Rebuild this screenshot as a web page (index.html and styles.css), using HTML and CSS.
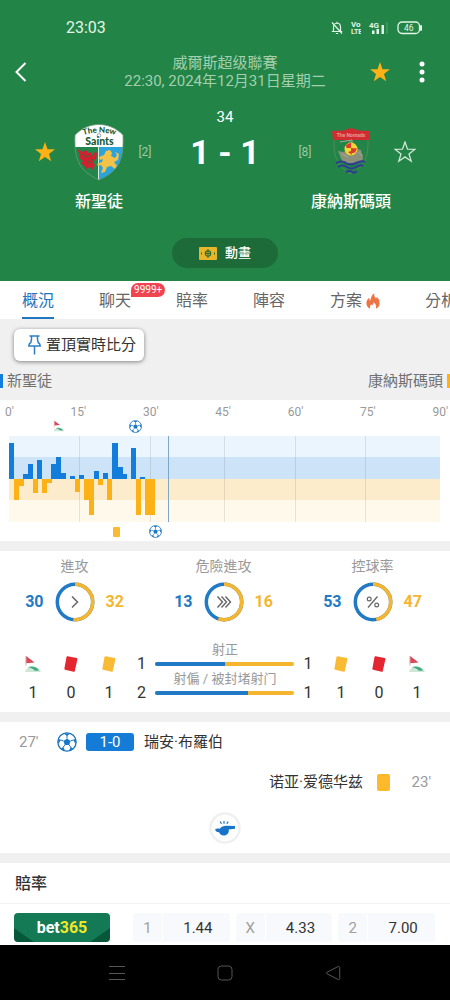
FILE: index.html
```
<!DOCTYPE html>
<html lang="zh-Hant">
<head>
<meta charset="utf-8">
<meta name="viewport" content="width=device-width, initial-scale=1">
<title>新聖徒 1 - 1 康納斯碼頭</title>
<link rel="stylesheet" href="styles.css">
</head>
<body>
<svg class="defs" aria-hidden="true">
  <symbol id="ball" viewBox="0 0 20 20">
    <circle cx="10" cy="10" r="9.2" fill="#fff" stroke="#1a6fb8" stroke-width="1.2"/>
    <path d="M10 6.4l3.5 2.5-1.3 4.1H7.8L6.5 8.9z" fill="#1678c8"/>
    <path d="M10 6.4V3.2M13.500 8.900l3.200-1M12.200 13l2 2.700M7.800 13l-2 2.700M6.500 8.900l-3.200-1" stroke="#1678c8" stroke-width="1"/>
    <path d="M6.800 1.500h6.400L10 4zM18.900 6.400l-.1 6.100-2.600-4.600zM16.400 16.600l-4.500 2.500 1.600-3.800zM8.100 19.100l-4.500-2.500 2.900-1.300zM1.100 6.400l.1 6.100 2.600-4.600z" fill="#1678c8"/>
  </symbol>
  <symbol id="corner" viewBox="0 0 18 18">
    <path d="M2.200 1l8.300 6.500-8.300.8z" fill="#dc4655"/>
    <path d="M1.800 1v10" stroke="#d9a3a6" stroke-width=".8"/>
    <path d="M1 17c.5-3.500 4-5.500 7.500-5.500S15.500 13.500 17 17z" fill="#cfe6da"/>
    <path d="M4 12.300c4-1.800 9-.3 11.200 3.200l-4.500.2c-1.500-1.900-3.700-3-6.700-3.400z" fill="#3fae7c"/>
  </symbol>
  <symbol id="card" viewBox="0 0 18 18">
    <path d="M5.700 1.200l9 1.800a1 1 0 01.7 1.200l-2.600 11.700a1 1 0 01-1.200.8l-8.500-2a1 1 0 01-.7-1.200L4.500 2a1 1 0 011.200-.8z" fill="currentColor"/>
  </symbol>
  <symbol id="star" viewBox="0 0 22 22">
    <path d="M11 1l2.500 7.200 7.500.1-6 4.600 2.200 7.300L11 15.900l-6.200 4.300L7 12.900 1 8.300l7.500-.1z"/>
  </symbol>
</svg>

<header class="hero">
  <div class="status">
    <span class="clock">23:03</span>
    <div class="status-icons">
      <svg width="12" height="14" viewBox="0 0 12 14" fill="none" stroke="#e3f5e8" stroke-width="1.200"><path d="M2.500 10.500V6c0-5 7-5 7 0v4.500M.8 10.500h10.400M4.800 12.500h2.400M6 2V.8M1 1.500l10 11"/></svg>
      <svg width="10" height="14" viewBox="0 0 10 14" font-family="Roboto" font-size="8" font-weight="700" fill="#e3f5e8"><text x="0" y="6">Vo</text><text x="0" y="13" font-size="7">LTE</text></svg>
      <svg width="20" height="14" viewBox="0 0 20 14"><text x="0" y="6.500" font-family="Roboto" font-size="8" font-weight="700" fill="#e3f5e8">4G</text><path d="M3 9.500h2.500V13H3zM7.500 8H10v5H7.500zM12.500 4H15v9h-2.500z" fill="#e3f5e8"/><path d="M18 1v12" stroke="#55a572"/></svg>
      <svg width="26" height="14" viewBox="0 0 26 14"><rect x="1" y="1" width="21.500" height="11.500" rx="4" fill="none" stroke="#e3f5e8" stroke-width="1.300"/><path d="M24 5v4" stroke="#e3f5e8" stroke-width="2" stroke-linecap="round"/><text x="11.800" y="10" text-anchor="middle" font-family="Roboto" font-size="8.500" fill="#e3f5e8">46</text></svg>
    </div>
  </div>
  <div class="topbar">
    <button class="icon-btn back" aria-label="返回"><svg width="12" height="20" viewBox="0 0 12 20" fill="none" stroke="#fff" stroke-width="2"><path d="M10.500 1L1.500 10l9 9"/></svg></button>
    <div class="league"><div>威爾斯超级聯賽</div><div>22:30, 2024年12月31日星期二</div></div>
    <div class="actions">
      <button class="icon-btn" aria-label="收藏"><svg class="star-on" width="22" height="22"><use href="#star"/></svg></button>
      <button class="icon-btn more" aria-label="更多"><svg width="6" height="22" viewBox="0 0 6 22" fill="#fff"><circle cx="3" cy="3" r="2.500"/><circle cx="3" cy="11" r="2.500"/><circle cx="3" cy="19" r="2.500"/></svg></button>
    </div>
  </div>
  <div class="minute">34</div>
  <div class="match">
    <button class="icon-btn" aria-label="收藏新聖徒"><svg class="star-on" width="22" height="22"><use href="#star"/></svg></button>
    <svg class="crest" width="50" height="58" viewBox="0 0 50 58">
      <defs><clipPath id="shield"><path d="M1 12C8 5 16 1.500 25 1.500S42 5 49 12c.5 13-.500 22-5 30C39 50 31 54 25 57 19 54 11 50 6 42 1.500 34 .500 25 1 12z"/></clipPath></defs>
      <g clip-path="url(#shield)">
        <rect width="50" height="24" fill="#fff"/>
        <rect y="24" width="24.500" height="34" fill="#22854c"/>
        <rect x="24.500" y="24" width="26" height="34" fill="#2ba3dc"/>
        <path d="M24.500 24v34" stroke="#d8ecd9"/>
        <path d="M3 26l6 3 3-2 2 3 3-1 1 4 3-4 2 1-1 6-3 3 2 3-2 5-3-3-4 2-2-4-3-1 2-3-4-3 1-3z" fill="#d3202f"/>
        <path d="M8 31l4 3 3-1M13 38l4 2 2-4" stroke="#3a6a3c" stroke-width="1" fill="none"/>
        <path d="M32 28l4-1 2 3-1 3 4 2 2-3-2-3 4 2-1 6-4 2 3 4-2 3-4-3-4 1-2 5-4 1 2-5-2-3-3 1-1-2 5-2 1-3-3 1-1-3 5-2z" fill="#f4c246"/>
      </g>
      <path d="M1 12C8 5 16 1.500 25 1.500S42 5 49 12c.5 13-.500 22-5 30C39 50 31 54 25 57 19 54 11 50 6 42 1.500 34 .500 25 1 12z" fill="none" stroke="#6f9a76" stroke-width=".8"/>
      <path id="arc" d="M7 13Q25 6 44 13" fill="none"/>
      <text font-family="Lato, sans-serif" font-size="8" font-weight="900" fill="#175a34"><textPath href="#arc" startOffset="50%" text-anchor="middle">The New</textPath></text>
      <circle cx="25" cy="12.500" r="1.800" fill="#fff" stroke="#777" stroke-width=".7"/>
      <text x="25.500" y="22" text-anchor="middle" font-family="Lato, sans-serif" font-size="10.500" font-weight="900" fill="#175a34">Saints</text>
    </svg>
    <span class="rank">[2]</span>
    <span class="score">1 - 1</span>
    <span class="rank">[8]</span>
    <svg class="crest" width="42" height="50" viewBox="0 0 42 50">
      <path d="M4 12c-1 18 4 28 17 35 13-7 18-17 17-35" fill="none" stroke="#4e8d59" stroke-width="1"/>
      <path d="M2 4l11-.5L21 1l8 2.500L40 4l-1 9H3z" fill="#d02c31"/>
      <text x="21" y="10" text-anchor="middle" font-family="Roboto" font-size="5" font-weight="700" fill="#eb9a90">The Nomads</text>
      <path d="M8 24c4 1 7 2 9-2l3-9 3 8 8 2 2 9-4 4H13z" fill="#8b917a"/>
      <path d="M10 15l12-2v5M12 27l6 3M28 25l5 4" stroke="#a5a992" fill="none"/>
      <circle cx="21" cy="22" r="6.500" fill="#f1d735"/>
      <path d="M16 18l5-2.500V21h-4.500zM21 21l6 .5-2 4-4 1zM18 25l3-1 1 4z" fill="#da3a32"/>
      <path d="M6 36q6-3 10 0t10 0 9-1M8 40q5-3 9 0t9 0 7-1M16 45q4-2 6 0t5-1" fill="none" stroke="#303b91" stroke-width="2"/>
    </svg>
    <button class="icon-btn" aria-label="收藏康納斯碼頭"><svg class="star-off" width="24" height="24" viewBox="-1 -1 24 24"><use href="#star" width="22" height="22"/></svg></button>
    <span class="team home">新聖徒</span>
    <span class="team away">康納斯碼頭</span>
  </div>
  <button class="animate">
    <svg width="18" height="13" viewBox="0 0 18 13"><rect width="18" height="13" rx="1" fill="#e9b52b"/><circle cx="9" cy="6.500" r="2.700" fill="none" stroke="#2d6c30" stroke-width="1.200"/><path d="M9 2v9M6.500 6.500h5M2.500 5.500v2M15.500 5.500v2" stroke="#2d6c30" stroke-width="1"/></svg>
    動畫
  </button>
</header>

<nav class="tabs">
  <a class="active" href="#overview">概況</a>
  <a href="#chat">聊天<span class="badge">9999+</span></a>
  <a href="#odds">賠率</a>
  <a href="#lineup">陣容</a>
  <a href="#tips">方案<svg width="14" height="16" viewBox="0 0 14 16"><path d="M4 15.700C1.500 14.500.300 12.500.400 10 .500 7.800 1.500 6 3.300 4.700c0 1.500.2 2.300.9 3C5 5 5.300 2.300 8.300.300 8 3 8.700 4.300 10.200 5.700l.5-1.900C12.800 5.600 13.800 8 13.600 10.400c-.2 2.400-1.500 4.300-3.800 5.300.9-2.400.3-4.300-2.200-6.400 0 1.500-.6 2.500-1.600 3.100-.3-.5-.5-.9-.5-1.400C4.200 12.400 3.700 13.900 4 15.700z" fill="#ee7345"/></svg></a>
  <a href="#analysis">分析</a>
</nav>

<main>
  <div class="pin-row">
    <button class="pin">
      <svg width="13" height="20" viewBox="0 0 13 20" fill="none" stroke="#2b80c5" stroke-width="1.500"><path d="M1.500 1h10M3.500 1v3.500L2.800 7.500C1.500 8.300.800 9.300.800 11h11.400c0-1.700-.7-2.700-2-3.500l-.7-3V1M6.500 11v8.500"/></svg>
      置頂實時比分
    </button>
  </div>
  <div class="legend"><span class="home-key">新聖徒</span><span class="away-key">康納斯碼頭</span></div>

  <section class="card chart" id="overview">
    <div class="ticks"><span>0'</span><span>15'</span><span>30'</span><span>45'</span><span>60'</span><span>75'</span><span>90'</span></div>
    <div class="lane top">
      <svg class="m11" width="12" height="12"><use href="#corner"/></svg>
      <svg class="m27" width="13" height="13"><use href="#ball"/></svg>
    </div>
    <svg class="plot" viewBox="0 0 431 86" preserveAspectRatio="none" shape-rendering="crispEdges">
      <path d="M0 0h431v21H0z" fill="#eaf5fd"/><path d="M0 21h431v22H0z" fill="#cde3f7"/>
      <path d="M0 43h431v21H0z" fill="#fdeccb"/><path d="M0 64h431v22H0z" fill="#fef9ea"/>
      <path d="M70.500 0v86M141.500 0v86M215.500 0v86M286.500 0v86M356.500 0v86" stroke="#000" stroke-opacity=".09"/>
      <path fill="#127ddb" d="M0 43V7h5v36zM14 43v-5h5v5zM19 43V28h5v15zM28 43V24h5v19zM42 43V28h5v15zM47 43V21h5v22zM52 43v-6h5v6zM61 43v-3h5v3zM70 43v-4h5v4zM85 43v-8h5v8zM94 43v-6h5v6zM103 43V7h6v36zM109 43V31h5v12zM114 43v-5h4v5zM122 43V12h5v31zM131 43v-2h5v2z"/>
      <path fill="#fcb116" d="M5 43v21h5V43zM10 43v7h5v-7zM24 43v14h5V43zM33 43v14h5V43zM38 43v4h5v-4zM66 43v13h5V43zM75 43v21h5V43zM80 43v36h5V43zM89 43v6h5v-6zM98 43v21h5V43zM127 43v36h5V43zM136 43v36h10V43z"/>
      <path d="M159.500 0v86" stroke="#7fa6c6"/>
    </svg>
    <div class="lane bottom">
      <span class="mini-card m23"></span>
      <svg class="m31" width="13" height="13"><use href="#ball"/></svg>
    </div>
  </section>

  <section class="card stats">
    <div class="rings">
      <div class="ring"><h3>進攻</h3><div><b class="h">30</b>
        <svg width="40" height="40" viewBox="0 0 40 40" fill="none"><g transform="rotate(-90 20 20)" stroke-width="3.500"><circle cx="20" cy="20" r="17.700" stroke="#207ac5"/><circle cx="20" cy="20" r="17.700" stroke="#f5b52e" pathLength="100" stroke-dasharray="51.600 48.400"/></g><path d="M17 14.500l5.500 5.500-5.500 5.500" stroke="#666" stroke-width="1.500"/></svg>
        <b class="a">32</b></div></div>
      <div class="ring"><h3>危險進攻</h3><div><b class="h">13</b>
        <svg width="40" height="40" viewBox="0 0 40 40" fill="none"><g transform="rotate(-90 20 20)" stroke-width="3.500"><circle cx="20" cy="20" r="17.700" stroke="#207ac5"/><circle cx="20" cy="20" r="17.700" stroke="#f5b52e" pathLength="100" stroke-dasharray="55.200 44.800"/></g><path d="M13.500 14.500l5 5.500-5 5.500M17.500 14.500l5 5.500-5 5.500M21.500 14.500l5 5.500-5 5.500" stroke="#666" stroke-width="1.400"/></svg>
        <b class="a">16</b></div></div>
      <div class="ring"><h3>控球率</h3><div><b class="h">53</b>
        <svg width="40" height="40" viewBox="0 0 40 40" fill="none"><g transform="rotate(-90 20 20)" stroke-width="3.500"><circle cx="20" cy="20" r="17.700" stroke="#207ac5"/><circle cx="20" cy="20" r="17.700" stroke="#f5b52e" pathLength="100" stroke-dasharray="47 53"/></g><path d="M24.500 14.500l-9.500 11" stroke="#666" stroke-width="1.300"/><circle cx="16.200" cy="17" r="1.900" stroke="#666" stroke-width="1.200"/><circle cx="23.700" cy="23" r="1.900" stroke="#666" stroke-width="1.200"/></svg>
        <b class="a">47</b></div></div>
    </div>
    <div class="details">
      <div class="counts">
        <div><svg width="18" height="18"><use href="#corner"/></svg><span>1</span></div>
        <div><svg class="red" width="18" height="18"><use href="#card"/></svg><span>0</span></div>
        <div><svg class="yellow" width="18" height="18"><use href="#card"/></svg><span>1</span></div>
      </div>
      <div class="shots">
        <div class="shot-label">射正</div>
        <div class="shot"><span>1</span><div class="bar"><i style="width:50%"></i></div><span>1</span></div>
        <div class="shot-label">射偏 / 被封堵射门</div>
        <div class="shot"><span>2</span><div class="bar"><i style="width:67%"></i></div><span>1</span></div>
      </div>
      <div class="counts">
        <div><svg class="yellow" width="18" height="18"><use href="#card"/></svg><span>1</span></div>
        <div><svg class="red" width="18" height="18"><use href="#card"/></svg><span>0</span></div>
        <div><svg width="18" height="18"><use href="#corner"/></svg><span>1</span></div>
      </div>
    </div>
  </section>

  <section class="card events">
    <div class="event"><time>27'</time><svg width="20" height="20"><use href="#ball"/></svg><span class="goal">1-0</span><span class="player">瑞安·布羅伯</span></div>
    <div class="event away"><span class="player" lang="zh-Hans">诺亚·爱德华兹</span><span class="booking"></span><time>23'</time></div>
    <div class="whistle"><svg width="32" height="32" viewBox="0 0 32 32"><circle cx="16" cy="16" r="14.500" fill="#fff" stroke="#f1f0f1" stroke-width="2.500"/><path d="M6 17.500c1.500-1.300 3.300-1.200 4.800-.7 1.700-2.300 4-3.100 6.600-3l8.600.2v2.700l-6.300.9c.7 3.500-1.700 6-4.900 6-2.400 0-4.200-1.300-4.800-3.500-1.700.3-3.400-.8-4-2.600z" fill="#1774c8"/><path d="M15 11.800V9M12.500 11.800l-1.300-2.200M17.800 11.800l1.300-2.200" stroke="#1774c8" stroke-width="1.200"/></svg></div>
  </section>

  <section class="card odds" id="odds">
    <h2>賠率</h2>
    <div class="odds-row">
      <a class="book" href="#bet365">bet<em>365</em></a>
      <div class="prices">
        <button class="price"><span>1</span><b>1.44</b></button>
        <button class="price"><span>X</span><b>4.33</b></button>
        <button class="price"><span>2</span><b>7.00</b></button>
      </div>
    </div>
  </section>
</main>

<footer class="sysnav">
  <button aria-label="最近"><svg width="16" height="16" viewBox="0 0 16 16"><path d="M0 1.500h16M0 8.500h16M0 14.500h16"/></svg></button>
  <button aria-label="主頁"><svg width="16" height="16" viewBox="0 0 16 16"><rect x="1" y="1" width="14" height="14" rx="3.500"/></svg></button>
  <button aria-label="返回"><svg width="16" height="16" viewBox="0 0 16 16"><path d="M13.200 1.500L1.800 7.300a.8.800 0 000 1.400l11.400 5.800a1 1 0 001.500-.9V2.400a1 1 0 00-1.500-.9z"/></svg></button>
</footer>
</body>
</html>
```
FILE: styles.css
```
* { box-sizing: border-box; }
body {
  margin: 0;
  min-height: 100vh;
  display: flex;
  flex-direction: column;
  background: #f0f0f0;
  color: #333;
  font-family: Roboto, "Noto Sans CJK TC", sans-serif;
  font-size: 15px;
  line-height: 20px;
  overflow-x: hidden;
}
button { border: 0; padding: 0; background: none; font: inherit; color: inherit; cursor: pointer; }
a { color: inherit; text-decoration: none; }
h2, h3 { margin: 0; font-weight: 400; }
svg { display: block; flex: none; }
.defs { position: absolute; width: 0; height: 0; }

/* header */
.hero { background: #228447; color: #fff; display: flex; flex-direction: column; padding-bottom: 13px; }
.status { display: flex; justify-content: space-between; align-items: center; padding: 18px 27px 0 66px; color: #e3f5e8; }
.clock { font-size: 16px; }
.status-icons { display: flex; align-items: center; gap: 8px; }
.topbar { display: grid; grid-template-columns: 72px 1fr 72px; align-items: center; padding: 16px 12px 0; }
.icon-btn { display: flex; justify-content: center; align-items: center; }
.back { justify-self: start; padding: 0 3px; }
.league { text-align: center; line-height: 18px; color: #a4cfae; white-space: nowrap; }
.actions { display: flex; justify-content: flex-end; gap: 28px; padding-right: 13px; }
.star-on { fill: #fcb116; }
.star-off { fill: none; stroke: #cfe6d4; stroke-width: 1.300px; }
.minute { text-align: center; padding-top: 17px; }
.match { display: grid; grid-template-columns: 50px 58px 34px 1fr 34px 58px 50px; grid-template-rows: 50px 24px; row-gap: 13px; align-items: center; justify-items: center; padding: 0 20px; }
.match > * { grid-row: 1; }
.rank { font-size: 12px; color: #9fcaa9; }
.score { font-size: 34px; line-height: 40px; font-weight: 700; white-space: nowrap; }
.team { font-size: 16px; line-height: 24px; font-weight: 500; white-space: nowrap; }
.match > .team { grid-row: 2; }
.home { grid-column: 2; }
.match .away { grid-column: 6; }
.animate { display: flex; align-items: center; justify-content: center; gap: 8px; align-self: center; width: 106px; height: 30px; margin-top: 24px; border-radius: 15px; background: #1d6b39; font-size: 13px; font-weight: 500; }

/* tabs */
.tabs { display: flex; gap: 45px; padding: 0 22px; height: 38px; background: #fff; overflow: hidden; font-size: 16px; color: #666; white-space: nowrap; }
.tabs a { display: flex; align-items: center; gap: 4px; flex: none; position: relative; padding-top: 2px; }
.tabs .active { color: #2079c0; box-shadow: inset 0 -2px #2079c0; }
.badge { position: absolute; left: 32px; top: 2px; padding: 0 3px; border-radius: 7px 7px 7px 0; background: #f0444f; color: #fff; font-size: 10px; line-height: 14px; }

/* pin and legend */
.pin-row { padding: 10px 14px; }
.pin { display: flex; align-items: center; gap: 5px; height: 32px; padding: 0 8px 0 14px; border-radius: 6px; background: #fff; box-shadow: 0 1px 4px #0007; }
.legend { display: flex; justify-content: space-between; align-items: center; padding-bottom: 9px; color: #707070; }
.legend span { line-height: 14px; margin: 3px 0; }
.home-key { border-left: 3px solid #127ddb; padding-left: 4px; }
.away-key { border-right: 3px solid #fcb116; padding-right: 4px; }

.card { background: #fff; margin-bottom: 10px; }

/* momentum chart */
.chart { padding-top: 5px; }
.ticks { display: flex; justify-content: space-between; padding: 0 2px 0 5px; font-size: 12px; line-height: 15px; color: #999; }
.lane { display: grid; grid-template-columns: repeat(90, 1fr); align-items: center; justify-items: center; margin: 0 10px 0 9px; }
.lane > * { grid-row: 1; }
.top { height: 16px; align-items: start; }
.bottom { height: 19px; }
.m11 { grid-column: 10 / span 3; }
.m27 { grid-column: 26 / span 3; }
.m23 { grid-column: 22 / span 3; }
.m31 { grid-column: 30 / span 3; }
.plot { width: calc(100% - 19px); height: 86px; margin: 0 10px 0 9px; }
.mini-card { width: 7px; height: 10px; border-radius: 1px; background: #fbba32; }

/* stats */
.stats { padding: 5px 0 11px; }
.rings { display: grid; grid-template-columns: repeat(3, 1fr); padding-right: 3px; }
.ring h3 { font-size: 14px; text-align: center; color: #999; margin-bottom: 6px; }
.ring div { display: flex; justify-content: center; align-items: center; gap: 11px; }
.ring b { font-size: 16px; }
.h { color: #207ac5; }
.a { color: #f5b52e; }
.details { display: flex; align-items: flex-end; padding: 21px 14px 0; font-size: 16px; }
.counts { display: flex; }
.counts div { width: 38px; display: flex; flex-direction: column; align-items: center; gap: 12px; }
.counts span { line-height: 16px; }
.red { color: #e3262f; }
.yellow { color: #f9bb33; }
.shots { flex: 1; }
.shot-label { font-size: 13px; line-height: 13px; text-align: center; color: #999; }
.shot { display: grid; grid-template-columns: 27px 1fr 28px; align-items: center; line-height: 16px; text-align: center; }
.bar { height: 4px; border-radius: 2px; background: #f5b52e; overflow: hidden; }
.bar i { display: block; height: 4px; background: #207ac5; }

/* events */
.event { display: flex; align-items: center; height: 40px; padding: 0 19px; }
.event time { width: 38px; color: #999; }
.player { font-size: 15px; }
.goal { width: 48px; margin: 0 10px 0 9px; border-radius: 3px; background: #147cd6; color: #fff; text-align: center; line-height: 18px; }
.event.away { justify-content: flex-end; }
.event.away time { width: 41px; text-align: right; }
.booking { width: 13px; height: 17px; margin-left: 14px; border-radius: 2px; background: #fdb92b; }
.whistle { display: flex; justify-content: center; padding: 10px 0 9px; }

/* odds */
.odds { margin: 0; padding-bottom: 3px; }
.odds h2 { padding: 11px 15px 9px; font-size: 16px; font-weight: 500; border-bottom: 1px solid #f2f2f2; }
.odds-row { display: flex; gap: 23px; padding: 9px 15px 0 14px; }
.book { width: 96px; height: 29px; border-radius: 4px; background: linear-gradient(35deg, #07583b 14%, transparent 15%), linear-gradient(-35deg, #07583b 14%, #137a55 15%); color: #fff; font-size: 16px; font-weight: 700; line-height: 30px; text-align: center; }
.book em { font-style: normal; color: #efe62b; }
.prices { flex: 1; display: grid; grid-template-columns: repeat(3, 1fr); gap: 6px; }
.price { display: flex; height: 29px; line-height: 30px; background: #f8f9fc; border-radius: 3px; }
.price span { width: 30px; color: #a0a0a0; border-right: 1px solid #fff; }
.price b { flex: 1; padding-left: 3px; font-weight: 400; }

/* system navigation */
.sysnav { flex: 1; min-height: 55px; display: flex; justify-content: center; align-items: center; gap: 92px; background: #000; }
.sysnav svg { fill: none; stroke: #565656; stroke-width: 1px; }
```
